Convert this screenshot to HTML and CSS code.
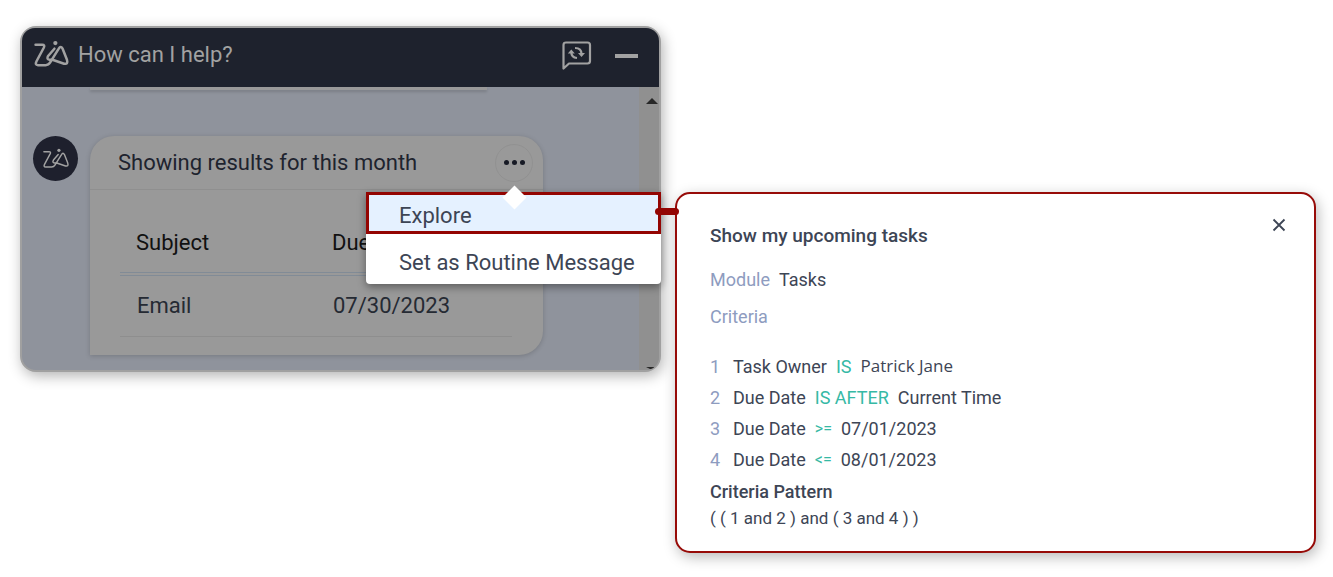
FILE: index.html
```html
<!DOCTYPE html>
<html lang="en">
<head>
<meta charset="utf-8">
<title>Zia</title>
<link rel="stylesheet" href="styles.css">
</head>
<body>
<svg class="defs" aria-hidden="true">
  <symbol id="zia" viewBox="0 0 38 30">
    <g fill="none" stroke="currentColor" stroke-linecap="round" stroke-linejoin="round">
      <path d="M2.500 5H9.500Q12.500 5 11 8L3.500 22Q1.500 26 5 26H13Q16 26 17.500 23.500L26.500 9Q28.500 5.500 30.500 9L35 20.500Q36.500 25.500 32 24.500L20 20.500"/>
      <path d="M22 9L15.500 16.500Q13.500 20 17 20.500H20"/>
    </g>
    <circle cx="23" cy="3.200" r="2.200" fill="currentColor"/>
  </symbol>
</svg>
<main class="stage">
  <section class="chat">
    <header class="chat-head">
      <svg class="logo"><use href="#zia"/></svg>
      <h1 class="chat-title">How can I help?</h1>
      <button class="icon-btn" aria-label="Restart conversation">
        <svg width="30" height="30" viewBox="0 0 30 30" fill="none" stroke="currentColor" stroke-width="2.200" stroke-linejoin="round"><path d="M1.500 27.500V4Q1.500 1.500 4 1.500H25.500Q28 1.500 28 4V20Q28 22.500 25.500 22.500H7Z"/><path d="M9.300 11Q9.300 16.500 15 17M13 7Q19.500 7 19.500 13"/><path d="M5.800 12.500L9.300 8.500L12.800 12.500ZM16 12L19.500 16L23 12Z" fill="currentColor" stroke="none"/></svg>
      </button>
      <button class="icon-btn" aria-label="Minimize"><span class="minus"></span></button>
    </header>
    <div class="chat-body">
      <div class="feed">
        <div class="previous"></div>
        <div class="message">
          <div class="avatar"><svg><use href="#zia"/></svg></div>
          <article class="card">
            <div class="card-head">
              <h2 class="card-title">Showing results for this month</h2>
              <button class="more" aria-label="More options"><i></i><i></i><i></i></button>
            </div>
            <table class="results">
              <thead><tr><th>Subject</th><th>Due</th></tr></thead>
              <tbody><tr><td>Email</td><td>07/30/2023</td></tr></tbody>
            </table>
          </article>
        </div>
      </div>
      <div class="scroll"><span class="up"></span><span class="down"></span></div>
    </div>
    <div class="menu">
      <button class="menu-item active">Explore</button>
      <button class="menu-item">Set as Routine Message</button>
    </div>
  </section>
  <section class="details">
    <header class="details-head">
      <h2 class="details-title">Show my upcoming tasks</h2>
      <button class="close" aria-label="Close"><svg width="14" height="14" viewBox="0 0 14 14" stroke="currentColor" stroke-width="1.800"><path d="M1.500 1.500L12.500 12.500M12.500 1.500L1.500 12.500"/></svg></button>
    </header>
    <p class="line"><span class="label">Module</span><span>Tasks</span></p>
    <p class="line"><span class="label">Criteria</span></p>
    <ol class="criteria">
      <li><span class="num">1</span><span>Task Owner</span><span class="op">IS</span><span class="person">Patrick Jane</span></li>
      <li><span class="num">2</span><span>Due Date</span><span class="op">IS AFTER</span><span>Current Time</span></li>
      <li><span class="num">3</span><span>Due Date</span><span class="op sign">&gt;=</span><span>07/01/2023</span></li>
      <li><span class="num">4</span><span>Due Date</span><span class="op sign">&lt;=</span><span>08/01/2023</span></li>
    </ol>
    <h3 class="pattern-title">Criteria Pattern</h3>
    <p class="pattern">( ( 1 and 2 ) and ( 3 and 4 ) )</p>
  </section>
</main>
</body>
</html>
```
FILE: styles.css
```css
* { box-sizing: border-box; }
body { margin: 0; background: #fff; font-family: Roboto, "Liberation Sans", sans-serif; color: #3d4555; }
h1, h2, h3, p, ol { margin: 0; padding: 0; font-weight: 400; }
button { margin: 0; padding: 0; border: 0; background: none; font: inherit; color: inherit; }
.defs { position: absolute; width: 0; height: 0; }
.stage { display: grid; grid-template-columns: 1fr 1fr; align-items: start; gap: 14px; padding: 26px 17px 24px 20px; }

.chat { position: relative; border: 2px solid #a0a0a0; border-radius: 16px; background: #8f939c; box-shadow: 2px 4px 14px rgba(0, 0, 0, .3); }
.chat-head { display: flex; align-items: center; height: 59px; padding: 0 21px 6px 11px; border-radius: 13px 13px 0 0; background: #1e222d; color: #a2a2a2; }
.logo { width: 37px; height: 29px; stroke-width: 2.600; }
.chat-title { flex: 1; padding-left: 8px; font-size: 22px; line-height: 30px; }
.icon-btn { display: flex; margin-left: 23px; padding-top: 3px; }
.minus { width: 23px; height: 4px; background: #a2a2a2; }
.chat-body { display: flex; height: 283px; overflow: hidden; border-radius: 0 0 13px 13px; }
.feed { flex: 1; padding: 0 96px 0 11px; }
.previous { height: 3px; margin: 0 56px 0 57px; background: #999; box-shadow: 0 2px 3px rgba(0, 0, 0, .15); }
.message { display: flex; align-items: flex-start; gap: 12px; padding-top: 46px; }
.avatar { display: flex; align-items: center; justify-content: center; width: 45px; height: 45px; border-radius: 50%; background: #1e202d; color: #a2a2a2; }
.avatar svg { width: 28px; height: 22px; stroke-width: 2; }
.card { flex: 1; padding-bottom: 18px; border-radius: 24px 24px 24px 0; background: #999; box-shadow: 0 1px 5px rgba(0, 0, 0, .18); }
.card-head { display: flex; align-items: center; justify-content: space-between; height: 54px; padding: 0 10px 0 28px; border-bottom: 1px solid #8f8f8f; }
.card-title { font-size: 22px; line-height: 28px; color: #1e232e; }
.more { display: flex; align-items: center; justify-content: center; gap: 3px; width: 38px; height: 38px; border: 1px solid #919191; border-radius: 50%; }
.more i { width: 5px; height: 5px; border-radius: 50%; background: #171a25; }
.results { width: calc(100% - 61px); margin: 22px 31px 0 30px; border-collapse: collapse; table-layout: fixed; font-size: 22px; line-height: 28px; }
.results th { height: 62px; padding: 2px 16px 0; border-bottom: 4px double #818b96; font-weight: 400; text-align: left; color: #111; }
.results td { height: 62px; padding: 0 17px; border-bottom: 1px solid #8e8e8e; color: #252a33; }
.scroll { display: flex; flex-direction: column; justify-content: space-between; align-items: center; width: 20px; padding: 11px 0 0 5px; background: #909090; }
.up, .down { border: 6px solid transparent; }
.up { border-top: 0; border-bottom-color: #272727; }
.down { border-bottom: 0; border-top: 3px solid #272727; }

.menu { position: absolute; top: 164px; right: -2px; width: 295px; border-radius: 0 0 4px 4px; background: #fff; box-shadow: 0 3px 8px rgba(0, 0, 0, .4); font-size: 22px; }
.menu::before { content: ""; position: absolute; top: -3px; left: 140px; width: 17px; height: 17px; background: #fff; transform: rotate(45deg); }
.menu-item { display: block; width: 100%; height: 50px; padding: 8px 0 0 33px; line-height: 28px; text-align: left; white-space: nowrap; }
.menu-item.active { height: 42px; padding: 6px 0 0 30px; border: 3px solid #930502; background: #e5f1ff; }

.details { position: relative; margin-top: 166px; padding: 29px 28px 23px 33px; border: 2px solid #970b08; border-radius: 15px; background: #fff; box-shadow: 2px 4px 14px rgba(0, 0, 0, .28); font-size: 18px; line-height: 26px; }
.details::before { content: ""; position: absolute; top: 14px; left: -22px; width: 24px; height: 7px; border-radius: 4px; background: #930502; }
.details-head { display: flex; align-items: center; justify-content: space-between; height: 26px; }
.details-title { font-size: 19px; font-weight: 500; }
.close { display: flex; padding-bottom: 22px; }
.line { display: flex; gap: 9px; padding-top: 18px; }
.line + .line { padding-top: 11px; }
.label, .num { color: #8e9cbf; }
.criteria { padding-top: 21px; list-style: none; line-height: 31px; }
.criteria li { display: flex; gap: 9px; }
.num { width: 14px; }
.op { color: #36b9a5; }
.sign { font-size: 16px; }
.person { font-family: "Open Sans", "Noto Sans", sans-serif; font-size: 17px; line-height: 29px; }
.pattern-title { padding-top: 1px; font-size: 18px; font-weight: 500; line-height: 32px; }
.pattern { font-size: 17px; line-height: 20px; }
```
